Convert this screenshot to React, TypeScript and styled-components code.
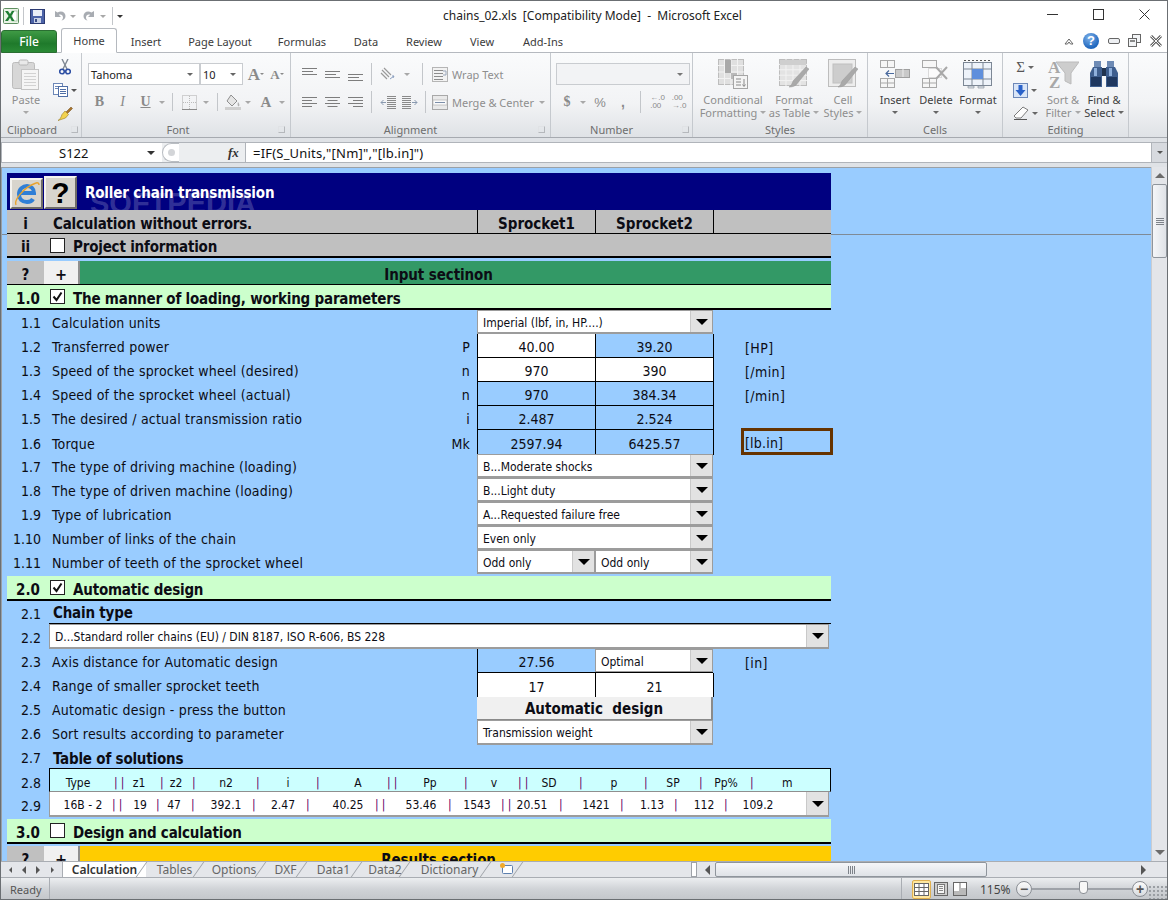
import React from 'react';
import styled, { createGlobalStyle } from 'styled-components';

const SHEET_FONT = `"DejaVu Sans Condensed", "DejaVu Sans", sans-serif`;
const UI_FONT = `"Noto Sans", "Open Sans", sans-serif`;

const GlobalStyle = createGlobalStyle`
  html, body { margin: 0; padding: 0; background: #fff; }
  * { box-sizing: border-box; }
`;

const Window = styled.div`
  width: 1168px;
  height: 900px;
  display: flex;
  flex-direction: column;
  border: 1px solid #6b6f73;
  overflow: hidden;
  font-family: ${UI_FONT};
  background: #fff;
`;

/* title bar */
const TitleBar = styled.div`
  height: 27px;
  flex: none;
  display: grid;
  grid-template-columns: 442px auto 1fr;
  align-items: center;
  background: #fff;
`;
const Qat = styled.div`
  display: flex;
  align-items: center;
  padding-top: 3px;
`;
const Slot = styled.div<{ $w: number; $ml?: number }>`
  width: ${p => p.$w}px;
  margin-left: ${p => p.$ml || 0}px;
  flex: none;
  display: flex;
  align-items: center;
  justify-content: center;
`;
const VSep = styled.div<{ $h?: number; $c?: string }>`
  width: 1px;
  height: ${p => p.$h || 18}px;
  background: ${p => p.$c || '#c3c6ca'};
`;
const TitleText = styled.div`
  font-size: 12px;
  color: #222;
  white-space: pre;
  padding-top: 2px;
`;
const WinButtons = styled.div`
  justify-self: end;
  display: flex;
`;
const Caret = styled.span<{ $c?: string; $s?: number }>`
  width: 0;
  height: 0;
  border-left: ${p => p.$s || 3}px solid transparent;
  border-right: ${p => p.$s || 3}px solid transparent;
  border-top: ${p => p.$s || 3}px solid ${p => p.$c || '#8a8a8a'};
  display: inline-block;
  flex: none;
`;

/* ribbon tabs */
const TabStrip = styled.div`
  height: 25px;
  flex: none;
  display: flex;
  align-items: flex-end;
  border-bottom: 1px solid #b5b9bf;
  background: #fff;
`;
const FileTab = styled.div`
  width: 56px;
  height: 23px;
  margin-bottom: -1px;
  border-radius: 3px 3px 0 0;
  background: linear-gradient(#3f9a45, #1f7a2b 60%, #2a8a36);
  border: 1px solid #2a6e32;
  color: #fff;
  font-size: 12px;
  font-weight: 500;
  display: flex;
  align-items: center;
  justify-content: center;
`;
const RibbonTab = styled.div<{ $w: number; $active?: boolean; $ml?: number }>`
  width: ${p => p.$w}px;
  margin-left: ${p => p.$ml || 0}px;
  height: ${p => (p.$active ? 25 : 23)}px;
  margin-bottom: -1px;
  font-size: 11px;
  color: #3b3b3b;
  display: flex;
  align-items: center;
  justify-content: center;
  ${p => p.$active && `
    background: #fff;
    border: 1px solid #b5b9bf;
    border-bottom-color: #fff;
    border-radius: 3px 3px 0 0;
  `}
`;
const RibbonControls = styled.div`
  margin-left: auto;
  height: 23px;
  display: flex;
  align-items: center;
  padding-right: 2px;
`;
const HelpBall = styled.div`
  width: 16px;
  height: 16px;
  border-radius: 50%;
  background: radial-gradient(circle at 40% 30%, #7fb2ea, #1f66bd 70%);
  color: #fff;
  font: bold 13px "Liberation Sans", sans-serif;
  display: flex;
  align-items: center;
  justify-content: center;
`;

/* ribbon */
const Ribbon = styled.div`
  height: 85px;
  flex: none;
  display: flex;
  background: linear-gradient(#fafbfc, #f2f3f5 60%, #dfe2e6);
  border-bottom: 1px solid #a6aab0;
`;
const Group = styled.div<{ $w: number }>`
  width: ${p => p.$w}px;
  flex: none;
  display: flex;
  flex-direction: column;
  border-right: 1px solid #c5c9ce;
`;
const GroupBody = styled.div<{ $pl?: number }>`
  height: 69px;
  display: flex;
  padding-left: ${p => p.$pl || 0}px;
`;
const StackBody = styled(GroupBody)`
  flex-direction: column;
  padding-top: 10px;
  gap: 6px;
`;
const GroupLabel = styled.div<{ $pr?: number }>`
  position: relative;
  height: 15px;
  font-size: 11px;
  line-height: 15px;
  color: #6e6e6e;
  text-align: center;
  padding-right: ${p => p.$pr || 0}px;
`;
const Launcher = styled.span<{ $r: number }>`
  position: absolute;
  right: ${p => p.$r}px;
  top: 4px;
  width: 7px;
  height: 7px;
  border: 1px solid #b5b8bc;
  border-top-color: #e0e2e5;
  border-left-color: #e0e2e5;
`;
const BigButton = styled.div<{ $w: number; $off?: boolean }>`
  width: ${p => p.$w}px;
  flex: none;
  padding-top: 6px;
  display: flex;
  flex-direction: column;
  align-items: center;
  font-size: 11px;
  line-height: 13px;
  color: ${p => (p.$off ? '#8e8e8e' : '#3e3e3e')};
  white-space: nowrap;
`;
const BigIcon = styled.div`
  height: 30px;
  margin-bottom: 4px;
  display: flex;
  align-items: center;
`;
const TextLine = styled.div`
  height: 13px;
  display: flex;
  align-items: center;
  gap: 3px;
`;
const ToolColumn = styled.div<{ $w: number }>`
  width: ${p => p.$w}px;
  flex: none;
  display: flex;
  flex-direction: column;
  padding-top: 5px;
  gap: 5px;
`;
const ToolRow = styled.div<{ $pl?: number }>`
  height: 22px;
  display: flex;
  align-items: center;
  padding-left: ${p => p.$pl || 0}px;
`;
const ToolCell = styled.div`
  height: 19px;
  display: flex;
  align-items: center;
  justify-content: center;
  gap: 3px;
`;
const ComboBox = styled.div<{ $w: number; $ml?: number }>`
  width: ${p => p.$w}px;
  margin-left: ${p => p.$ml || 0}px;
  flex: none;
  height: 22px;
  background: #fff;
  border: 1px solid #c9ccd0;
  font-size: 11px;
  color: #222;
  display: flex;
  align-items: center;
  justify-content: space-between;
  padding: 0 6px 0 2px;
`;
const DisabledCombo = styled(ComboBox)`
  background: #f2f3f5;
`;
const Glyph = styled.span<{ $serif?: boolean; $bold?: boolean; $it?: boolean; $u?: boolean; $s?: number; $c?: string }>`
  font-family: ${p => (p.$serif ? '"Liberation Serif", serif' : '"Liberation Sans", sans-serif')};
  font-weight: ${p => (p.$bold ? 700 : 400)};
  font-style: ${p => (p.$it ? 'italic' : 'normal')};
  text-decoration: ${p => (p.$u ? 'underline' : 'none')};
  font-size: ${p => p.$s || 13}px;
  color: ${p => p.$c || '#8a8a8a'};
  line-height: 1;
`;
const SmallLabel = styled.span`
  font-size: 11px;
  color: #8e8e8e;
  white-space: nowrap;
  margin-left: 4px;
`;

/* formula bar */
const FormulaWrap = styled.div`
  height: 29px;
  flex: none;
  background: #dfe2e6;
  padding: 4px 0;
`;
const FormulaBar = styled.div`
  height: 21px;
  display: flex;
  align-items: stretch;
  background: #fff;
  border-top: 1px solid #b0b4ba;
  border-bottom: 1px solid #b0b4ba;
`;
const NameBox = styled.div`
  width: 161px;
  flex: none;
  display: flex;
  align-items: center;
  font-size: 13px;
  color: #111;
  padding-left: 57px;
  padding-right: 7px;
  justify-content: space-between;
  border-left: 1px solid #b0b4ba;
`;
const NameGrip = styled.div`
  width: 84px;
  flex: none;
  background: #eceef0;
  display: flex;
  align-items: center;
  border-right: 1px solid #b0b4ba;
`;
const GripKnob = styled.div`
  width: 17px;
  height: 19px;
  border: 1px solid #b9bdc2;
  border-right: none;
  border-radius: 10px 0 0 10px;
  background: #fff;
  display: flex;
  align-items: center;
  justify-content: center;
`;
const GripDot = styled.div`
  width: 7px;
  height: 7px;
  border-radius: 50%;
  background: #d3d5d8;
`;
const FxMark = styled.span`
  font: italic bold 13px "Liberation Serif", serif;
  color: #333;
  margin-left: 49px;
`;
const FormulaText = styled.div`
  flex: 1;
  font-size: 13px;
  color: #111;
  display: flex;
  align-items: center;
  padding-left: 7px;
  letter-spacing: 0.2px;
`;
const ExpandBtn = styled.div`
  width: 16px;
  flex: none;
  background: #d7dadf;
  border-left: 1px solid #b0b4ba;
  display: flex;
  align-items: center;
  justify-content: center;
`;

/* worksheet */
const SheetArea = styled.div`
  height: 694px;
  flex: none;
  display: flex;
`;
const SheetPane = styled.div`
  position: relative;
  flex: 1;
  overflow: hidden;
  background: #99ccff;
  border-left: 1px solid #9aa0a6;
  border-top: 1px solid #9aa0a6;
  padding: 5px 0 0 5px;
  font-family: ${SHEET_FONT};
  font-size: 14px;
  color: #0c0c14;
`;
const FreezeLine = styled.div`
  position: absolute;
  left: 0;
  right: 0;
  top: 66px;
  height: 1px;
  background: #7f8a96;
`;
const Sheet = styled.div`
  position: relative;
  width: 824px;
  display: flex;
  flex-direction: column;
`;
const TitleRow = styled.div`
  position: relative;
  height: 37px;
  flex: none;
  background: #000080;
  color: #fff;
  font-weight: 700;
  font-size: 15px;
  display: flex;
  align-items: flex-end;
  overflow: hidden;
  padding-left: 3px;
  gap: 1px;
`;
const Watermark = styled.div`
  position: absolute;
  left: 83px;
  top: 16px;
  font: bold 29px/1 "Liberation Sans", sans-serif;
  color: rgba(255, 255, 255, 0.2);
`;
const MacroButton = styled.div<{ $h: number }>`
  width: 33px;
  height: ${p => p.$h}px;
  margin-bottom: 1px;
  background: #d8d5cd;
  border: 2px solid;
  border-color: #f5f4f0 #6f6d68 #6f6d68 #f5f4f0;
  display: flex;
  align-items: center;
  justify-content: center;
  color: #000;
  font: bold 30px/1 "Liberation Sans", sans-serif;
`;
const TitleLabel = styled.div`
  align-self: center;
  padding-left: 7px;
  padding-top: 2px;
  letter-spacing: -0.15px;
`;
const Row = styled.div<{ $h: number; $bg?: string; $line?: number; $mt?: number }>`
  height: ${p => p.$h}px;
  margin-top: ${p => p.$mt || 0}px;
  flex: none;
  display: grid;
  grid-template-columns: 37px 433px 118px 118px 118px;
  background: ${p => p.$bg || 'transparent'};
  border-bottom: ${p => p.$line || 0}px solid #000;
  align-items: stretch;
`;
const Num = styled.div<{ $bold?: boolean; $center?: boolean; $low?: boolean }>`
  display: flex;
  align-items: center;
  justify-content: ${p => (p.$center ? 'center' : 'flex-end')};
  padding-right: ${p => (p.$center ? 0 : p.$bold ? 4 : 3)}px;
  padding-top: ${p => (p.$low ? 6 : p.$bold ? 4 : 2)}px;
  font-weight: ${p => (p.$bold ? 700 : 400)};
  font-size: ${p => (p.$bold ? 15 : 14)}px;
`;
const Label = styled.div<{ $bold?: boolean }>`
  display: flex;
  align-items: center;
  justify-content: space-between;
  padding-left: ${p => (p.$bold ? 9 : 8)}px;
  padding-right: 7px;
  padding-top: ${p => (p.$bold ? 4 : 2)}px;
  font-weight: ${p => (p.$bold ? 700 : 400)};
  font-size: ${p => (p.$bold ? 15 : 14)}px;
  letter-spacing: ${p => (p.$bold ? -0.2 : 0.2)}px;
  white-space: nowrap;
`;
const WideLabel = styled(Label)`
  grid-column: 2 / -1;
`;
const RuledLabel = styled(WideLabel)`
  margin-left: 5px;
  padding-left: 4px;
  padding-top: 2px;
  border-bottom: 1px solid #000;
`;
const CheckLabel = styled(WideLabel)`
  justify-content: flex-start;
  padding-left: 6px;
  gap: 8px;
`;
const CheckBox = styled.div`
  width: 15px;
  height: 15px;
  background: #fff;
  border: 1px solid #222;
  display: flex;
  align-items: center;
  justify-content: center;
  margin-top: -4px;
`;
const HeadCell = styled.div`
  border-left: 1px solid #000;
  display: flex;
  align-items: center;
  justify-content: center;
  font-weight: 700;
  font-size: 15px;
  padding-top: 4px;
`;
const PlusButton = styled.div`
  background: #f0f0f0;
  border-right: 2px solid #8f8f8f;
  display: flex;
  align-items: center;
  justify-content: center;
  font-weight: 700;
  font-size: 16px;
  padding-top: 3px;
`;
const SectionBand = styled.div<{ $bg: string }>`
  background: ${p => p.$bg};
  grid-column: 2 / -1;
  display: grid;
  grid-template-columns: 36px 1fr;
`;
const SectionTitle = styled.div`
  display: flex;
  align-items: center;
  justify-content: center;
  font-weight: 700;
  font-size: 15px;
  letter-spacing: -0.1px;
  padding-right: 34px;
  padding-top: 4px;
`;
const Value = styled.div<{ $input?: boolean; $flat?: boolean; $top?: boolean }>`
  background: ${p => (p.$input ? '#fff' : 'transparent')};
  border-left: 1px solid #000;
  border-bottom: ${p => (p.$flat ? 'none' : '1px solid #000')};
  ${p => p.$top && 'box-shadow: 0 -1px 0 #000;'}
  display: flex;
  align-items: center;
  justify-content: center;
  padding-top: 3px;
`;
const Unit = styled.div<{ $line?: boolean }>`
  border-left: ${p => (p.$line ? '1px solid #000' : '1px solid transparent')};
  display: flex;
  align-items: center;
  padding-left: 31px;
  padding-top: 4px;
  letter-spacing: 0.4px;
`;
const SelectedUnit = styled.div`
  height: 27px;
  margin: -2px -2px 0 27px;
  border: 3px solid #663300;
  display: flex;
  align-items: center;
  padding-left: 1px;
  padding-top: 3px;
  letter-spacing: 0.2px;
`;
const UnitHolder = styled.div`
  border-left: 1px solid #000;
`;
const Combo = styled.div<{ $span?: boolean; $wide?: boolean }>`
  ${p => p.$span && 'grid-column: 3 / span 2;'}
  ${p => p.$wide && 'grid-column: 2 / -1; margin: 0 2px 0 5px;'}
  background: #fff;
  border: 1px solid #9c9c9c;
  border-bottom-width: 2px;
  font-size: 12px;
  display: flex;
  align-items: stretch;
  min-width: 0;
`;
const ComboText = styled.div`
  flex: 1;
  padding-left: 5px;
  padding-top: 2px;
  display: flex;
  align-items: center;
  white-space: nowrap;
  overflow: hidden;
`;
const ComboButton = styled.div`
  width: 22px;
  flex: none;
  background: #e2e2e2;
  border-left: 1px solid #c9c9c9;
  display: flex;
  align-items: center;
  justify-content: center;
`;
const PressButton = styled.div`
  grid-column: 3 / span 2;
  background: #f0f0f0;
  border-right: 2px solid #8a8a8a;
  border-bottom: 1px solid #8a8a8a;
  display: flex;
  align-items: center;
  justify-content: center;
  font-weight: 700;
  font-size: 15px;
  padding-top: 2px;
  white-space: pre;
`;
const StripHead = styled.div`
  grid-column: 2 / -1;
  margin-left: 5px;
  background: #ccffff;
  border: 1px solid #000;
  border-bottom: 1px solid #8f8f8f;
  display: flex;
  align-items: center;
  font-size: 12px;
  padding-top: 5px;
`;
const StripData = styled.div`
  grid-column: 2 / -1;
  margin: 0 2px 0 5px;
  background: #fff;
  border: 1px solid #9c9c9c;
  border-top: none;
  border-bottom-width: 2px;
  display: flex;
  align-items: stretch;
  font-size: 12px;
`;
const StripCols = styled.div`
  flex: 1;
  display: flex;
  align-items: center;
  padding-top: 2px;
`;
const StripCell = styled.span<{ $w: number; $shift: number }>`
  width: ${p => p.$w}px;
  flex: none;
  text-align: center;
  white-space: nowrap;
  padding-left: ${p => Math.max(0, p.$shift)}px;
  padding-right: ${p => Math.max(0, -p.$shift)}px;
`;
const StripSep = styled.span<{ $double?: boolean }>`
  width: ${p => (p.$double ? 7 : 2)}px;
  flex: none;
  color: #660066;
  letter-spacing: ${p => (p.$double ? 3 : 0)}px;
  overflow: visible;
  white-space: nowrap;
`;

/* vertical scrollbar */
const VScroll = styled.div`
  width: 16px;
  flex: none;
  display: flex;
  flex-direction: column;
  background: #e3e5e9;
  border-left: 1px solid #c9ccd1;
`;
const ArrowBox = styled.div<{ $h?: number; $w?: number }>`
  height: ${p => (p.$h ? `${p.$h}px` : '17px')};
  ${p => p.$w && `width: ${p.$w}px;`}
  flex: none;
  display: flex;
  align-items: center;
  justify-content: center;
`;
const VThumb = styled.div`
  height: 74px;
  flex: none;
  margin-bottom: auto;
  background: linear-gradient(90deg, #f5f6f8, #dfe2e7);
  border: 1px solid #8f959c;
  border-radius: 2px;
  display: flex;
  align-items: center;
  justify-content: center;
`;
const GripLines = styled.div`
  width: 8px;
  height: 7px;
  background: repeating-linear-gradient(#7d8289 0 1px, transparent 1px 2px);
`;
const UpTri = styled.span`
  width: 0;
  height: 0;
  border: 5px solid transparent;
  border-top: none;
  border-bottom: 5px solid #6b6b6b;
`;
const DownTri = styled.span`
  width: 0;
  height: 0;
  border: 5px solid transparent;
  border-bottom: none;
  border-top: 5px solid #6b6b6b;
`;
const LeftTri = styled.span<{ $s?: number }>`
  width: 0;
  height: 0;
  border: ${p => p.$s || 5}px solid transparent;
  border-left: none;
  border-right: ${p => p.$s || 5}px solid #555;
`;
const RightTri = styled.span<{ $s?: number }>`
  width: 0;
  height: 0;
  border: ${p => p.$s || 5}px solid transparent;
  border-right: none;
  border-left: ${p => p.$s || 5}px solid #555;
`;

/* sheet tabs */
const TabBar = styled.div`
  height: 16px;
  flex: none;
  display: flex;
  background: #e4e6ea;
  border-top: 1px solid #a9adb3;
  position: relative;
`;
const TabNav = styled.div`
  width: 62px;
  flex: none;
  padding-left: 2px;
  display: flex;
  align-items: center;
  border-right: 1px solid #a9adb3;
`;
const NavBtn = styled.div`
  width: 14px;
  display: flex;
  align-items: center;
  justify-content: center;
`;
const SheetTab = styled.div<{ $w: number; $active?: boolean }>`
  position: relative;
  width: ${p => p.$w}px;
  flex: none;
  font-size: 12px;
  line-height: 15px;
  text-align: center;
  white-space: nowrap;
  color: ${p => (p.$active ? '#333' : '#666')};
  font-weight: ${p => (p.$active ? 600 : 400)};
  background: ${p => (p.$active ? '#fff' : 'transparent')};
  &::after {
    content: '';
    position: absolute;
    right: 4px;
    top: 0;
    bottom: 0;
    width: 1px;
    background: #9ea2a8;
    transform: skewX(-35deg);
  }
`;
const TabSplit = styled.div`
  margin-left: auto;
  width: 6px;
  flex: none;
  background: #fff;
  border: 1px solid #9ea2a8;
`;
const HScroll = styled.div`
  width: 452px;
  margin-left: 2px;
  flex: none;
  display: flex;
  align-items: stretch;
`;
const HThumb = styled.div`
  width: 272px;
  flex: none;
  background: linear-gradient(#f5f6f8, #dfe2e7);
  border: 1px solid #8f959c;
  border-radius: 2px;
  display: flex;
  align-items: center;
  justify-content: center;
`;
const HGrip = styled.div`
  width: 7px;
  height: 8px;
  background: repeating-linear-gradient(90deg, #7d8289 0 1px, transparent 1px 2px);
`;
const HEnd = styled.div`
  margin-left: auto;
  width: 16px;
  display: flex;
  align-items: center;
  justify-content: center;
`;

/* status bar */
const StatusBar = styled.div`
  flex: 1;
  display: flex;
  align-items: center;
  background: linear-gradient(#eceef0, #d0d3d7 50%, #c3c6ca);
  border-top: 1px solid #a9adb3;
  font-size: 11px;
  color: #555;
`;
const StatusReady = styled.div`
  width: 49px;
  height: 100%;
  flex: none;
  padding-left: 9px;
  display: flex;
  align-items: center;
  border-right: 1px solid #a9adb3;
`;
const StatusRight = styled.div`
  margin-left: auto;
  display: flex;
  align-items: center;
`;
const ViewButton = styled.div<{ $on?: boolean; $ml?: number }>`
  width: ${p => (p.$on ? 19 : 16)}px;
  height: 19px;
  margin-left: ${p => p.$ml || 0}px;
  background: ${p => (p.$on ? '#ffe8a0' : 'transparent')};
  border: ${p => (p.$on ? '1px solid #e0b050' : 'none')};
  border-radius: 2px;
  display: flex;
  align-items: center;
  justify-content: center;
`;
const ZoomPct = styled.div`
  width: 28px;
  margin: 0 8px 0 12px;
  font-size: 12px;
  color: #444;
`;
const ZoomBall = styled.div`
  width: 16px;
  height: 16px;
  border-radius: 50%;
  background: linear-gradient(#fbfbfb, #d7dade);
  border: 1px solid #8b8f95;
  display: flex;
  align-items: center;
  justify-content: center;
  font: bold 14px/1 "Liberation Sans", sans-serif;
  color: #555;
`;
const SliderTrack = styled.div`
  position: relative;
  width: 100px;
  height: 2px;
  background: #9ea2a8;
`;
const SliderHandle = styled.div`
  position: absolute;
  left: 47px;
  top: -7px;
  width: 9px;
  height: 13px;
  background: #f7f7f7;
  border: 1px solid #8b8f95;
  border-radius: 2px 2px 4px 4px;
`;
const ResizeGrip = styled.div`
  width: 19px;
  height: 14px;
  margin-top: 6px;
  background: radial-gradient(#9a9ea3 1px, transparent 1.3px) 0 0 / 4px 4px;
`;

/* ---- icons ---- */
const DocLines = ({ x, y, w, n, c, step = 3 }: { x: number; y: number; w: number; n: number; c: string; step?: number }) => (
  <>
    {Array.from({ length: n }).map((_, i) => (
      <line key={i} x1={x} x2={x + w} y1={y + i * step + 0.5} y2={y + i * step + 0.5} stroke={c} />
    ))}
  </>
);

const ExcelLogo = () => (
  <svg width="16" height="16" viewBox="0 0 16 16">
    <rect x="0.5" y="0.5" width="15" height="15" rx="1" fill="#e9f3e6" stroke="#5e8f60" />
    <rect x="9" y="3" width="5" height="10" fill="#fff" stroke="#8ab48a" strokeWidth="0.6" />
    <path d="M2 3h3l2 3 2-3h2.4L8.4 8l3.2 5H8.8L7 9.8 5 13H2l3.6-5z" fill="#1e7d33" />
  </svg>
);
const SaveIcon = () => (
  <svg width="15" height="15" viewBox="0 0 15 15">
    <rect x="0.5" y="0.5" width="14" height="14" fill="#4c63a8" stroke="#2c3b73" />
    <rect x="3" y="1" width="9" height="6" fill="#e9edf7" />
    <rect x="4" y="9" width="7" height="5" fill="#c9d2e6" />
    <rect x="5" y="10" width="2" height="3" fill="#3a4c86" />
  </svg>
);
const UndoIcon = ({ flip }: { flip?: boolean }) => (
  <svg width="14" height="14" viewBox="0 0 14 14" style={flip ? { transform: 'scaleX(-1)' } : undefined}>
    <path d="M3 2v6h6L6.8 5.8C8.5 4.8 11 5.6 11 8.5c0 1.2-.6 2.2-1.5 3 2.4-.6 4-2.2 4-4.6C13.5 3 9 1 5.5 3.6z" fill="#a8acb2" />
  </svg>
);
const CloseX = ({ size = 11, c = '#333' }: { size?: number; c?: string }) => (
  <svg width={size} height={size} viewBox="0 0 11 11">
    <path d="M0.5 0.5l10 10M10.5 0.5l-10 10" stroke={c} fill="none" />
  </svg>
);
const MinLine = () => (
  <svg width="11" height="3" viewBox="0 0 11 3"><line x1="0" x2="11" y1="1.5" y2="1.5" stroke="#333" /></svg>
);
const MaxBox = () => (
  <svg width="11" height="11" viewBox="0 0 11 11"><rect x="0.5" y="0.5" width="10" height="10" fill="none" stroke="#333" /></svg>
);
const RibbonUp = () => (
  <svg width="10" height="8" viewBox="0 0 10 8"><path d="M1 7l4-5 4 5H6.5L5 5 3.5 7z" fill="none" stroke="#666" /></svg>
);
const MiniMin = () => (
  <svg width="12" height="6" viewBox="0 0 12 6"><rect x="0.5" y="0.5" width="11" height="5" rx="1.5" fill="#eef0f3" stroke="#666" /></svg>
);
const MiniRestore = () => (
  <svg width="13" height="13" viewBox="0 0 13 13">
    <rect x="4.5" y="0.5" width="8" height="8" fill="#f2f4f6" stroke="#666" />
    <rect x="0.5" y="4.5" width="8" height="8" fill="#f2f4f6" stroke="#666" />
    <rect x="2" y="6" width="5" height="2" fill="#888" />
  </svg>
);
const MiniClose = () => (
  <svg width="12" height="12" viewBox="0 0 12 12">
    <path d="M1 1l10 10M11 1L1 11" stroke="#666" strokeWidth="3" />
    <path d="M1 1l10 10M11 1L1 11" stroke="#f4f4f4" strokeWidth="1" />
  </svg>
);
const ClipboardIcon = () => (
  <svg width="28" height="31" viewBox="0 0 28 31">
    <rect x="0.5" y="3.5" width="22" height="26" rx="2" fill="#d7d7d7" stroke="#bcbcbc" />
    <rect x="7" y="1" width="9" height="5" rx="1.5" fill="#e9e9e9" stroke="#b6b6b6" />
    <rect x="9.5" y="10.5" width="17" height="20" fill="#f5f5f5" stroke="#c4c4c4" />
    <DocLines x={12} y={14} w={12} n={5} c="#d2d2d2" />
  </svg>
);
const ScissorsIcon = () => (
  <svg width="12" height="16" viewBox="0 0 12 16">
    <path d="M3 0l5 10M9 0L4 10" stroke="#7f8893" strokeWidth="1.4" />
    <circle cx="3" cy="12.5" r="2.3" fill="none" stroke="#2d4fa3" strokeWidth="1.6" />
    <circle cx="9" cy="12.5" r="2.3" fill="none" stroke="#2d4fa3" strokeWidth="1.6" />
  </svg>
);
const CopyIcon = () => (
  <svg width="15" height="14" viewBox="0 0 15 14">
    <rect x="0.5" y="0.5" width="9" height="11" fill="#fff" stroke="#6d88b8" />
    <rect x="5.5" y="3.5" width="9" height="10" fill="#fff" stroke="#4f6ea6" />
    <DocLines x={7} y={6} w={6} n={3} c="#4f6ea6" step={2} />
    <DocLines x={2} y={3} w={3} n={2} c="#6d88b8" step={2} />
  </svg>
);
const BrushIcon = () => (
  <svg width="16" height="15" viewBox="0 0 16 15">
    <path d="M9 6l5-5 1.5 1.5-5 5z" fill="#a9742a" stroke="#6e4a18" strokeWidth="0.5" />
    <path d="M8 5l3.500 3.500-3 3.500L1 14.500c2-1 3-3 4-6z" fill="#f2d24f" stroke="#9a7c1e" strokeWidth="0.6" />
  </svg>
);
const AlignIcon = ({ widths, offsetY = 0, step = 2, align = 'left' }: { widths: number[]; offsetY?: number; step?: number; align?: 'left' | 'center' | 'right' }) => (
  <svg width="15" height="14" viewBox="0 0 15 14">
    {widths.map((w, i) => {
      const x = align === 'left' ? 0 : align === 'right' ? 15 - w : (15 - w) / 2;
      return <line key={i} x1={x} x2={x + w} y1={offsetY + i * step + 0.5} y2={offsetY + i * step + 0.5} stroke="#7d7d7d" />;
    })}
  </svg>
);
const OrientIcon = () => (
  <svg width="16" height="15" viewBox="0 0 16 15">
    <path d="M2 3l7 7M4 1l7 7M1 6l6 6" stroke="#9a9a9a" strokeWidth="1.2" />
    <path d="M10 12l4-3M14 9l-2 0M14 9l-1 2" stroke="#8ca0c0" fill="none" />
  </svg>
);
const IndentIcon = ({ flip }: { flip?: boolean }) => (
  <svg width="16" height="13" viewBox="0 0 16 13" style={flip ? { transform: 'scaleX(-1)' } : undefined}>
    <DocLines x={7} y={0} w={9} n={7} c="#8a8a8a" step={2} />
    <path d="M6 6.500H1M3.500 4L1 6.500 3.500 9" fill="none" stroke="#8a9ab0" />
  </svg>
);
const WrapIcon = () => (
  <svg width="16" height="15" viewBox="0 0 16 15">
    <rect x="0.5" y="0.5" width="15" height="14" fill="#f2f2f2" stroke="#b5b5b5" />
    <DocLines x={2} y={3} w={9} n={4} c="#8c8c8c" />
    <path d="M11 4h3v4h-3" fill="none" stroke="#9aa7bb" />
  </svg>
);
const MergeIcon = () => (
  <svg width="16" height="15" viewBox="0 0 16 15">
    <rect x="0.5" y="0.5" width="15" height="14" fill="#e9e9e9" stroke="#a8a8a8" />
    <rect x="1" y="5" width="14" height="5" fill="#fafafa" stroke="#a8a8a8" strokeWidth="0.6" />
    <path d="M3 7.500h10" stroke="#7c8ea8" />
  </svg>
);
const BorderIcon = () => (
  <svg width="15" height="15" viewBox="0 0 15 15">
    <rect x="0.5" y="0.5" width="14" height="14" fill="none" stroke="#aaa" strokeDasharray="1 1" />
    <path d="M7.500 1v13M1 7.500h13" stroke="#bbb" strokeDasharray="1 1" />
    <line x1="0" x2="15" y1="14.500" y2="14.500" stroke="#8a8a8a" />
  </svg>
);
const FillIcon = () => (
  <svg width="16" height="16" viewBox="0 0 16 16">
    <path d="M6 1l6 6-5 5-5-5z" fill="#e5e5e5" stroke="#8f8f8f" />
    <path d="M13 8c1 1.500 2 3 1 4s-2-1-1-4z" fill="#b0b0b0" />
    <rect x="0" y="13" width="16" height="3" fill="#cfcfcf" />
  </svg>
);
const GridIcon = ({ w = 30, h = 28, cols = 4, rows = 4, c = '#cfcfcf', line = '#f2f2f2' }: { w?: number; h?: number; cols?: number; rows?: number; c?: string; line?: string }) => (
  <>
    <rect x="0.5" y="0.5" width={w - 1} height={h - 1} fill={c} stroke="#bdbdbd" />
    {Array.from({ length: cols - 1 }).map((_, i) => (
      <line key={`c${i}`} x1={((i + 1) * w) / cols} x2={((i + 1) * w) / cols} y1="0" y2={h} stroke={line} />
    ))}
    {Array.from({ length: rows - 1 }).map((_, i) => (
      <line key={`r${i}`} y1={((i + 1) * h) / rows} y2={((i + 1) * h) / rows} x1="0" x2={w} stroke={line} />
    ))}
  </>
);
const PaintBrushStroke = () => (
  <path d="M30 10L17 26c-3 2-5 2-7 2 2-1 3-3 4-6L27 8z" fill="#a9a9a9" stroke="#999" strokeWidth="0.5" />
);
const ConditionalIcon = () => (
  <svg width="30" height="30" viewBox="0 0 30 30">
    <GridIcon w={26} h={26} c="#e0e0e0" />
    <rect x="7" y="1" width="6" height="13" fill="#a9a9a9" />
    <rect x="13" y="14" width="6" height="6" fill="#b9b9b9" />
    <rect x="15.500" y="16.500" width="14" height="13" fill="#f4f4f4" stroke="#a5a5a5" />
    <path d="M18 20h5M18 23h5M18 26h5M26 20v7M24.500 25.500L26 27.500l1.500-2" stroke="#8a8a8a" fill="none" />
  </svg>
);
const TableStyleIcon = () => (
  <svg width="30" height="30" viewBox="0 0 30 30">
    <GridIcon w={28} h={27} c="#e3e3e3" cols={4} rows={5} />
    <rect x="1" y="1" width="26" height="5" fill="#cfcfcf" />
    <PaintBrushStroke />
  </svg>
);
const CellStyleIcon = () => (
  <svg width="30" height="30" viewBox="0 0 30 30">
    <rect x="0.5" y="0.5" width="27" height="27" fill="#ededed" stroke="#bdbdbd" />
    <rect x="5" y="5" width="19" height="19" fill="#cdcdcd" stroke="#c0c0c0" />
    <PaintBrushStroke />
  </svg>
);
const InsertIcon = () => (
  <svg width="30" height="28" viewBox="0 0 30 28">
    <g fill="#f6f6f6" stroke="#a8a8a8">
      <rect x="0.5" y="0.5" width="14" height="7" />
      <rect x="0.5" y="18.500" width="14" height="9" />
      <line x1="7.500" x2="7.500" y1="0" y2="7" />
      <line x1="7.500" x2="7.500" y1="18" y2="27" />
      <line x1="0" x2="14" y1="23" y2="23" />
    </g>
    <rect x="15.500" y="9.500" width="14" height="8" fill="#c9c9c9" stroke="#9f9f9f" />
    <line x1="23" x2="23" y1="9" y2="17" stroke="#eee" />
    <path d="M14 13.500H6M9 10.500l-3 3 3 3" fill="none" stroke="#4a6a9e" strokeWidth="1.200" />
  </svg>
);
const DeleteIcon = () => (
  <svg width="28" height="28" viewBox="0 0 28 28">
    <g fill="#f6f6f6" stroke="#a8a8a8">
      <rect x="0.5" y="0.500" width="14" height="7" />
      <rect x="0.5" y="18.500" width="14" height="9" />
      <line x1="7.500" x2="7.500" y1="18" y2="27" />
      <line x1="0" x2="14" y1="23" y2="23" />
    </g>
    <rect x="6.500" y="8.500" width="13" height="9" fill="#fbfbfb" stroke="#bbb" strokeDasharray="1 1" />
    <path d="M14 7l11 12M25 7L14 19" stroke="#a8a8a8" strokeWidth="2" />
  </svg>
);
const FormatIcon = () => (
  <svg width="30" height="30" viewBox="0 0 30 30">
    <path d="M1 1.500h28" stroke="#555" strokeDasharray="2 2" />
    <g fill="#eef3fa" stroke="#7c8795">
      <rect x="0.5" y="3.500" width="28" height="23" />
    </g>
    <path d="M9 4v22M20 4v22M1 10h27M1 20h27" stroke="#7c8795" />
    <rect x="9" y="10" width="11" height="10" fill="#5f8fdc" />
    <path d="M5 27h6v2H5zM15 27h6v2h-6z" fill="#dfe4ea" stroke="#7c8795" strokeWidth="0.6" />
  </svg>
);
const FillDownIcon = () => (
  <svg width="15" height="15" viewBox="0 0 15 15">
    <rect x="0.5" y="0.5" width="14" height="14" fill="#d9e5f7" stroke="#6d88b8" />
    <path d="M5.500 2h4v5h3L7.500 13 2.500 7h3z" fill="#2a62c9" />
  </svg>
);
const EraserIcon = () => (
  <svg width="16" height="14" viewBox="0 0 16 14">
    <path d="M10 1l5 3-7 8H3L1 10z" fill="#fdfdfd" stroke="#7c7c7c" />
    <path d="M1 13.500h13" stroke="#555" />
  </svg>
);
const SortIcon = () => (
  <svg width="32" height="30" viewBox="0 0 32 30">
    <path d="M9 3h23l-8 11v11l-6-3v-8z" fill="#cdcdcd" stroke="#bbb" />
    <text x="1" y="14" fontFamily="Liberation Serif, serif" fontSize="17" fontWeight="700" fill="#a8a8a8">A</text>
    <text x="2" y="29" fontFamily="Liberation Serif, serif" fontSize="17" fontWeight="700" fill="#a8a8a8">Z</text>
  </svg>
);
const BinocularsIcon = () => (
  <svg width="30" height="30" viewBox="0 0 30 30">
    <rect x="5" y="2" width="7" height="6" fill="#6e8bb5" />
    <rect x="18" y="2" width="7" height="6" fill="#6e8bb5" />
    <rect x="11" y="9" width="8" height="8" fill="#22344f" />
    <path d="M4 8h9v20H1V14z" fill="#3f5f8f" />
    <path d="M26 8h-9v20h12V14z" fill="#3f5f8f" />
    <rect x="2" y="18" width="10" height="9" fill="#1f3860" />
    <rect x="18" y="18" width="10" height="9" fill="#1f3860" />
    <rect x="5" y="9" width="3" height="8" fill="#8fb0dc" />
    <rect x="20" y="9" width="3" height="8" fill="#8fb0dc" />
  </svg>
);
const IeLogo = () => (
  <svg width="27" height="27" viewBox="0 0 27 27">
    <path d="M7 13h14c0-4-3-7-7-7s-8 3-8 8 3 8 8 8c3 0 5-1 6-3" fill="none" stroke="#2f7fd6" strokeWidth="4" />
    <path d="M3 25C1 21 9 8 23 3c2-.8 3 .5 3 2" fill="none" stroke="#e8a22c" strokeWidth="1.400" />
  </svg>
);
const TickMark = () => (
  <svg width="11" height="11" viewBox="0 0 11 11">
    <path d="M1.500 5.500L4.500 9 9.500 1.500" fill="none" stroke="#111" strokeWidth="2" />
  </svg>
);
const ComboCaret = () => <Caret $c="#000" $s={6} />;
const NewSheetIcon = () => (
  <svg width="14" height="13" viewBox="0 0 14 13">
    <rect x="3.500" y="3.500" width="10" height="8" rx="1" fill="#fff" stroke="#5c7fae" />
    <circle cx="3.500" cy="3.500" r="2.500" fill="#f1a92b" />
  </svg>
);
const ViewNormal = () => (
  <svg width="15" height="13" viewBox="0 0 15 13">
    <rect x="0.500" y="0.500" width="14" height="12" fill="#fff" stroke="#666" />
    <path d="M5 0v13M10 0v13M0 4.500h15M0 8.500h15" stroke="#666" />
  </svg>
);
const ViewPage = () => (
  <svg width="14" height="14" viewBox="0 0 14 14">
    <rect x="0.500" y="0.500" width="13" height="13" fill="#ccc" stroke="#666" />
    <rect x="3.500" y="2.500" width="7" height="9" fill="#f6f6f6" stroke="#777" />
    <DocLines x={5} y={4} w={4} n={3} c="#888" step={2} />
  </svg>
);
const ViewBreak = () => (
  <svg width="14" height="14" viewBox="0 0 14 14">
    <rect x="0.500" y="0.500" width="13" height="13" fill="#b9b9b9" stroke="#666" />
    <rect x="1" y="1" width="5" height="8" fill="#fff" />
    <rect x="8" y="1" width="5" height="5" fill="#fff" />
  </svg>
);

/* ---- data ---- */
type Col = { t: string; c: number; sep?: number; dbl?: boolean };

const headCols: Col[] = [
  { t: 'Type', c: 78, sep: 114, dbl: true },
  { t: 'z1', c: 139, sep: 160 },
  { t: 'z2', c: 176, sep: 192 },
  { t: 'n2', c: 226, sep: 256 },
  { t: 'i', c: 288, sep: 316 },
  { t: 'A', c: 358, sep: 387, dbl: true },
  { t: 'Pp', c: 430, sep: 464 },
  { t: 'v', c: 494, sep: 518, dbl: true },
  { t: 'SD', c: 549, sep: 579 },
  { t: 'p', c: 614, sep: 644 },
  { t: 'SP', c: 673, sep: 699 },
  { t: 'Pp%', c: 726, sep: 750 },
  { t: 'm', c: 786 },
];
const dataCols: Col[] = [
  { t: '16B - 2', c: 83, sep: 112, dbl: true },
  { t: '19', c: 140, sep: 156 },
  { t: '47', c: 174, sep: 191 },
  { t: '392.1', c: 226, sep: 252 },
  { t: '2.47', c: 283, sep: 306 },
  { t: '40.25', c: 348, sep: 375, dbl: true },
  { t: '53.46', c: 421, sep: 448 },
  { t: '1543', c: 477, sep: 501, dbl: true },
  { t: '20.51', c: 532, sep: 559 },
  { t: '1421', c: 596, sep: 620 },
  { t: '1.13', c: 652, sep: 674 },
  { t: '112', c: 704, sep: 724 },
  { t: '109.2', c: 758 },
];

const StripColumns = ({ cols }: { cols: Col[] }) => {
  let cursor = 50;
  return (
    <>
      {cols.map(col => {
        const end = col.sep ?? 790;
        const cell = (
          <React.Fragment key={col.t}>
            <StripCell $w={end - cursor} $shift={2 * col.c - cursor - end}>{col.t}</StripCell>
            {col.sep && <StripSep $double={col.dbl}>{col.dbl ? '||' : '|'}</StripSep>}
          </React.Fragment>
        );
        cursor = end + (col.dbl ? 7 : 2);
        return cell;
      })}
    </>
  );
};

const DropCombo = ({ text, span, wide }: { text: string; span?: boolean; wide?: boolean }) => (
  <Combo $span={span} $wide={wide}>
    <ComboText>{text}</ComboText>
    <ComboButton><ComboCaret /></ComboButton>
  </Combo>
);

const GrayDrop = () => <Caret $c="#a8a8a8" />;

function App() {
  return (
    <>
      <GlobalStyle />
      <Window>
        <TitleBar>
          <Qat>
            <Slot $w={17} $ml={1}><ExcelLogo /></Slot>
            <Slot $w={8}><VSep /></Slot>
            <Slot $w={15} $ml={3}><SaveIcon /></Slot>
            <Slot $w={16} $ml={6}><UndoIcon /></Slot>
            <Slot $w={12}><GrayDrop /></Slot>
            <Slot $w={16} $ml={3}><UndoIcon flip /></Slot>
            <Slot $w={10}><GrayDrop /></Slot>
            <Slot $w={8}><VSep /></Slot>
            <Slot $w={8}><Caret $c="#333" /></Slot>
          </Qat>
          <TitleText>chains_02.xls  [Compatibility Mode]  -  Microsoft Excel</TitleText>
          <WinButtons>
            <Slot $w={46}><MinLine /></Slot>
            <Slot $w={46}><MaxBox /></Slot>
            <Slot $w={46}><CloseX /></Slot>
          </WinButtons>
        </TitleBar>

        <TabStrip>
          <FileTab>File</FileTab>
          <RibbonTab $w={56} $ml={4} $active>Home</RibbonTab>
          <RibbonTab $w={58}>Insert</RibbonTab>
          <RibbonTab $w={90}>Page Layout</RibbonTab>
          <RibbonTab $w={74}>Formulas</RibbonTab>
          <RibbonTab $w={54}>Data</RibbonTab>
          <RibbonTab $w={62}>Review</RibbonTab>
          <RibbonTab $w={54}>View</RibbonTab>
          <RibbonTab $w={68}>Add-Ins</RibbonTab>
          <RibbonControls>
            <Slot $w={16}><RibbonUp /></Slot>
            <Slot $w={18} $ml={5}><HelpBall>?</HelpBall></Slot>
            <Slot $w={18} $ml={5}><MiniMin /></Slot>
            <Slot $w={18} $ml={2}><MiniRestore /></Slot>
            <Slot $w={18} $ml={4}><MiniClose /></Slot>
          </RibbonControls>
        </TabStrip>

        <Ribbon>
          <Group $w={81}>
            <GroupBody>
              <BigButton $w={50} $off>
                <BigIcon><ClipboardIcon /></BigIcon>
                <TextLine>Paste</TextLine>
                <TextLine><GrayDrop /></TextLine>
              </BigButton>
              <ToolColumn $w={28}>
                <ToolCell><ScissorsIcon /></ToolCell>
                <ToolCell><CopyIcon /><Caret $c="#555" /></ToolCell>
                <ToolCell><BrushIcon /></ToolCell>
              </ToolColumn>
            </GroupBody>
            <GroupLabel $pr={18}>Clipboard<Launcher $r={3} /></GroupLabel>
          </Group>

          <Group $w={209}>
            <StackBody $pl={6}>
              <ToolRow>
                <ComboBox $w={112}>Tahoma<Caret $c="#666" /></ComboBox>
                <ComboBox $w={43}>10<Caret $c="#666" /></ComboBox>
                <Slot $w={24} $ml={1}><Glyph $serif $bold $s={17}>A</Glyph><Caret $c="#8a8a8a" $s={2} /></Slot>
                <Slot $w={18}><Glyph $serif $bold $s={13}>A</Glyph><Caret $c="#8a8a8a" $s={2} /></Slot>
              </ToolRow>
              <ToolRow>
                <Slot $w={23}><Glyph $serif $bold $s={14}>B</Glyph></Slot>
                <Slot $w={23}><Glyph $serif $it $s={14}>I</Glyph></Slot>
                <Slot $w={23}><Glyph $serif $bold $u $s={14}>U</Glyph></Slot>
                <Slot $w={10}><GrayDrop /></Slot>
                <Slot $w={10}><VSep /></Slot>
                <Slot $w={24}><BorderIcon /></Slot>
                <Slot $w={9}><GrayDrop /></Slot>
                <Slot $w={14}><VSep /></Slot>
                <Slot $w={18}><FillIcon /></Slot>
                <Slot $w={12}><GrayDrop /></Slot>
                <Slot $w={24}><Glyph $serif $bold $s={15}>A</Glyph></Slot>
                <Slot $w={8}><GrayDrop /></Slot>
              </ToolRow>
            </StackBody>
            <GroupLabel $pr={16}>Font<Launcher $r={5} /></GroupLabel>
          </Group>

          <Group $w={260}>
            <StackBody $pl={7}>
              <ToolRow>
                <Slot $w={23}><AlignIcon widths={[15, 11, 15]} offsetY={1} step={3} /></Slot>
                <Slot $w={23}><AlignIcon widths={[15, 11, 15]} offsetY={4} step={3} /></Slot>
                <Slot $w={23}><AlignIcon widths={[15, 11, 15]} offsetY={7} step={3} /></Slot>
                <Slot $w={8}><VSep $h={22} /></Slot>
                <Slot $w={25}><OrientIcon /></Slot>
                <Slot $w={13}><GrayDrop /></Slot>
                <Slot $w={19}><VSep $h={22} /></Slot>
                <WrapIcon />
                <SmallLabel>Wrap Text</SmallLabel>
              </ToolRow>
              <ToolRow>
                <Slot $w={23}><AlignIcon widths={[15, 10, 15, 10]} offsetY={2} step={3} /></Slot>
                <Slot $w={23}><AlignIcon widths={[15, 10, 15, 10]} offsetY={2} step={3} align="center" /></Slot>
                <Slot $w={23}><AlignIcon widths={[15, 10, 15, 10]} offsetY={2} step={3} align="right" /></Slot>
                <Slot $w={8}><VSep $h={22} /></Slot>
                <Slot $w={26}><IndentIcon /></Slot>
                <Slot $w={18}><IndentIcon flip /></Slot>
                <Slot $w={13}><VSep $h={22} /></Slot>
                <MergeIcon />
                <SmallLabel>Merge &amp; Center</SmallLabel>
                <Slot $w={10} $ml={3}><GrayDrop /></Slot>
              </ToolRow>
            </StackBody>
            <GroupLabel $pr={20}>Alignment<Launcher $r={5} /></GroupLabel>
          </Group>

          <Group $w={142}>
            <StackBody $pl={5}>
              <ToolRow>
                <DisabledCombo $w={134}><span />
                  <Caret $c="#777" />
                </DisabledCombo>
              </ToolRow>
              <ToolRow>
                <Slot $w={22}><Glyph $serif $bold $s={14}>$</Glyph></Slot>
                <Slot $w={9}><GrayDrop /></Slot>
                <Slot $w={26}><Glyph $s={13}>%</Glyph></Slot>
                <Slot $w={20}><Glyph $bold $s={14}>,</Glyph></Slot>
                <Slot $w={14}><VSep $h={22} /></Slot>
                <Slot $w={21}><Glyph $s={8}>←.0<br />.00</Glyph></Slot>
                <Slot $w={22}><Glyph $s={8}>.00<br />→.0</Glyph></Slot>
              </ToolRow>
            </StackBody>
            <GroupLabel $pr={20}>Number<Launcher $r={3} /></GroupLabel>
          </Group>

          <Group $w={175}>
            <GroupBody $pl={5}>
              <BigButton $w={70} $off>
                <BigIcon><ConditionalIcon /></BigIcon>
                <TextLine>Conditional</TextLine>
                <TextLine>Formatting<GrayDrop /></TextLine>
              </BigButton>
              <BigButton $w={52} $off>
                <BigIcon><TableStyleIcon /></BigIcon>
                <TextLine>Format</TextLine>
                <TextLine>as Table<GrayDrop /></TextLine>
              </BigButton>
              <BigButton $w={46} $off>
                <BigIcon><CellStyleIcon /></BigIcon>
                <TextLine>Cell</TextLine>
                <TextLine>Styles<GrayDrop /></TextLine>
              </BigButton>
            </GroupBody>
            <GroupLabel>Styles</GroupLabel>
          </Group>

          <Group $w={135}>
            <GroupBody $pl={4}>
              <BigButton $w={46}>
                <BigIcon><InsertIcon /></BigIcon>
                <TextLine>Insert</TextLine>
                <TextLine><Caret $c="#666" /></TextLine>
              </BigButton>
              <BigButton $w={36}>
                <BigIcon><DeleteIcon /></BigIcon>
                <TextLine>Delete</TextLine>
                <TextLine><Caret $c="#666" /></TextLine>
              </BigButton>
              <BigButton $w={48}>
                <BigIcon><FormatIcon /></BigIcon>
                <TextLine>Format</TextLine>
                <TextLine><Caret $c="#666" /></TextLine>
              </BigButton>
            </GroupBody>
            <GroupLabel>Cells</GroupLabel>
          </Group>

          <Group $w={126}>
            <GroupBody $pl={7}>
              <ToolColumn $w={30}>
                <ToolCell><Glyph $serif $s={15} $c="#555">Σ</Glyph><Caret $c="#666" /></ToolCell>
                <ToolCell><FillDownIcon /><Caret $c="#666" /></ToolCell>
                <ToolCell><EraserIcon /><Caret $c="#666" /></ToolCell>
              </ToolColumn>
              <BigButton $w={46} $off>
                <BigIcon><SortIcon /></BigIcon>
                <TextLine>Sort &amp;</TextLine>
                <TextLine>Filter<GrayDrop /></TextLine>
              </BigButton>
              <BigButton $w={36}>
                <BigIcon><BinocularsIcon /></BigIcon>
                <TextLine>Find &amp;</TextLine>
                <TextLine>Select<Caret $c="#666" /></TextLine>
              </BigButton>
            </GroupBody>
            <GroupLabel>Editing</GroupLabel>
          </Group>
        </Ribbon>

        <FormulaWrap>
          <FormulaBar>
            <NameBox>S122<Caret $c="#333" $s={4} /></NameBox>
            <NameGrip>
              <GripKnob><GripDot /></GripKnob>
              <FxMark>fx</FxMark>
            </NameGrip>
            <FormulaText>=IF(S_Units,"[Nm]","[lb.in]")</FormulaText>
            <ExpandBtn><Caret $c="#555" /></ExpandBtn>
          </FormulaBar>
        </FormulaWrap>

        <SheetArea>
          <SheetPane>
            <FreezeLine />
            <Sheet>
              <TitleRow>
                <Watermark>SOFTPEDIA</Watermark>
                <MacroButton $h={31}><IeLogo /></MacroButton>
                <MacroButton $h={33}>?</MacroButton>
                <TitleLabel>Roller chain transmission</TitleLabel>
              </TitleRow>

              <Row $h={24} $bg="#c0c0c0" $line={1}>
                <Num $bold $center>i</Num>
                <Label $bold>Calculation without errors.</Label>
                <HeadCell>Sprocket1</HeadCell>
                <HeadCell>Sprocket2</HeadCell>
                <HeadCell />
              </Row>
              <Row $h={24} $bg="#c0c0c0" $line={2}>
                <Num $bold $center>ii</Num>
                <CheckLabel $bold><CheckBox />Project information</CheckLabel>
              </Row>
              <Row $h={24} $mt={3} $bg="#c0c0c0" $line={1}>
                <Num $bold $center>?</Num>
                <SectionBand $bg="#339966">
                  <PlusButton>+</PlusButton>
                  <SectionTitle>Input sectinon</SectionTitle>
                </SectionBand>
              </Row>
              <Row $h={25} $bg="#ccffcc" $line={2}>
                <Num $bold>1.0</Num>
                <CheckLabel $bold><CheckBox><TickMark /></CheckBox>The manner of loading, working parameters</CheckLabel>
              </Row>

              <Row $h={24}>
                <Num>1.1</Num>
                <Label>Calculation units</Label>
                <DropCombo span text="Imperial (lbf, in, HP....)" />
              </Row>
              <Row $h={24}>
                <Num>1.2</Num>
                <Label>Transferred power<span>P</span></Label>
                <Value $input>40.00</Value>
                <Value>39.20</Value>
                <Unit $line>[HP]</Unit>
              </Row>
              <Row $h={24}>
                <Num>1.3</Num>
                <Label>Speed of the sprocket wheel (desired)<span>n</span></Label>
                <Value $input>970</Value>
                <Value $input>390</Value>
                <Unit $line>[/min]</Unit>
              </Row>
              <Row $h={24}>
                <Num>1.4</Num>
                <Label>Speed of the sprocket wheel (actual)<span>n</span></Label>
                <Value>970</Value>
                <Value>384.34</Value>
                <Unit $line>[/min]</Unit>
              </Row>
              <Row $h={24}>
                <Num>1.5</Num>
                <Label>The desired / actual transmission ratio<span>i</span></Label>
                <Value>2.487</Value>
                <Value>2.524</Value>
                <Unit $line />
              </Row>
              <Row $h={24}>
                <Num>1.6</Num>
                <Label>Torque<span>Mk</span></Label>
                <Value>2597.94</Value>
                <Value>6425.57</Value>
                <UnitHolder><SelectedUnit>[lb.in]</SelectedUnit></UnitHolder>
              </Row>
              <Row $h={24}>
                <Num>1.7</Num>
                <Label>The type of driving machine (loading)</Label>
                <DropCombo span text="B...Moderate shocks" />
              </Row>
              <Row $h={24}>
                <Num>1.8</Num>
                <Label>The type of driven machine (loading)</Label>
                <DropCombo span text="B...Light duty" />
              </Row>
              <Row $h={24}>
                <Num>1.9</Num>
                <Label>Type of lubrication</Label>
                <DropCombo span text="A...Requested failure free" />
              </Row>
              <Row $h={24}>
                <Num>1.10</Num>
                <Label>Number of links of the chain</Label>
                <DropCombo span text="Even only" />
              </Row>
              <Row $h={24}>
                <Num>1.11</Num>
                <Label>Number of teeth of the sprocket wheel</Label>
                <DropCombo text="Odd only" />
                <DropCombo text="Odd only" />
              </Row>

              <Row $h={25} $mt={2} $bg="#ccffcc" $line={2}>
                <Num $bold>2.0</Num>
                <CheckLabel $bold><CheckBox><TickMark /></CheckBox>Automatic design</CheckLabel>
              </Row>
              <Row $h={23}>
                <Num>2.1</Num>
                <RuledLabel $bold>Chain type</RuledLabel>
              </Row>
              <Row $h={25}>
                <Num>2.2</Num>
                <DropCombo wide text="D...Standard roller chains (EU) / DIN 8187, ISO R-606, BS 228" />
              </Row>
              <Row $h={24}>
                <Num>2.3</Num>
                <Label>Axis distance for Automatic design</Label>
                <Value>27.56</Value>
                <DropCombo text="Optimal" />
                <Unit>[in]</Unit>
              </Row>
              <Row $h={24}>
                <Num>2.4</Num>
                <Label>Range of smaller sprocket teeth</Label>
                <Value $input $flat>17</Value>
                <Value $input $flat $top>21</Value>
                <Unit $line />
              </Row>
              <Row $h={23}>
                <Num>2.5</Num>
                <Label>Automatic design - press the button</Label>
                <PressButton>Automatic  design</PressButton>
              </Row>
              <Row $h={25}>
                <Num>2.6</Num>
                <Label>Sort results according to parameter</Label>
                <DropCombo span text="Transmission weight" />
              </Row>
              <Row $h={23}>
                <Num>2.7</Num>
                <WideLabel $bold>Table of solutions</WideLabel>
              </Row>
              <Row $h={24}>
                <Num $low>2.8</Num>
                <StripHead><StripColumns cols={headCols} /></StripHead>
              </Row>
              <Row $h={25}>
                <Num>2.9</Num>
                <StripData>
                  <StripCols><StripColumns cols={dataCols} /></StripCols>
                  <ComboButton><ComboCaret /></ComboButton>
                </StripData>
              </Row>
              <Row $h={25} $mt={2} $bg="#ccffcc" $line={2}>
                <Num $bold>3.0</Num>
                <CheckLabel $bold><CheckBox />Design and calculation</CheckLabel>
              </Row>
              <Row $h={24} $mt={2} $bg="#c0c0c0">
                <Num $bold $center>?</Num>
                <SectionBand $bg="#ffcc00">
                  <PlusButton>+</PlusButton>
                  <SectionTitle>Results section</SectionTitle>
                </SectionBand>
              </Row>
            </Sheet>
          </SheetPane>
          <VScroll>
            <ArrowBox><UpTri /></ArrowBox>
            <VThumb><GripLines /></VThumb>
            <ArrowBox><DownTri /></ArrowBox>
          </VScroll>
        </SheetArea>

        <TabBar>
          <TabNav>
            <NavBtn><LeftTri $s={3} /></NavBtn>
            <NavBtn><LeftTri $s={4} /></NavBtn>
            <NavBtn><RightTri $s={4} /></NavBtn>
            <NavBtn><RightTri $s={3} /></NavBtn>
          </TabNav>
          <SheetTab $w={83} $active>Calculation</SheetTab>
          <SheetTab $w={57}>Tables</SheetTab>
          <SheetTab $w={62}>Options</SheetTab>
          <SheetTab $w={41}>DXF</SheetTab>
          <SheetTab $w={55}>Data1</SheetTab>
          <SheetTab $w={48}>Data2</SheetTab>
          <SheetTab $w={81}>Dictionary</SheetTab>
          <SheetTab $w={32}><NewSheetIcon /></SheetTab>
          <TabSplit />
          <HScroll>
            <ArrowBox $h={15} $w={16}><LeftTri /></ArrowBox>
            <HThumb><HGrip /></HThumb>
            <HEnd><RightTri /></HEnd>
          </HScroll>
          <Slot $w={16} />
        </TabBar>

        <StatusBar>
          <StatusReady>Ready</StatusReady>
          <StatusRight>
            <VSep $h={22} $c="#a9adb3" />
            <ViewButton $on $ml={10}><ViewNormal /></ViewButton>
            <ViewButton $ml={2}><ViewPage /></ViewButton>
            <ViewButton $ml={3}><ViewBreak /></ViewButton>
            <ZoomPct>115%</ZoomPct>
            <ZoomBall>−</ZoomBall>
            <SliderTrack><SliderHandle /></SliderTrack>
            <ZoomBall>+</ZoomBall>
            <ResizeGrip />
          </StatusRight>
        </StatusBar>
      </Window>
    </>
  );
}

export default App;
